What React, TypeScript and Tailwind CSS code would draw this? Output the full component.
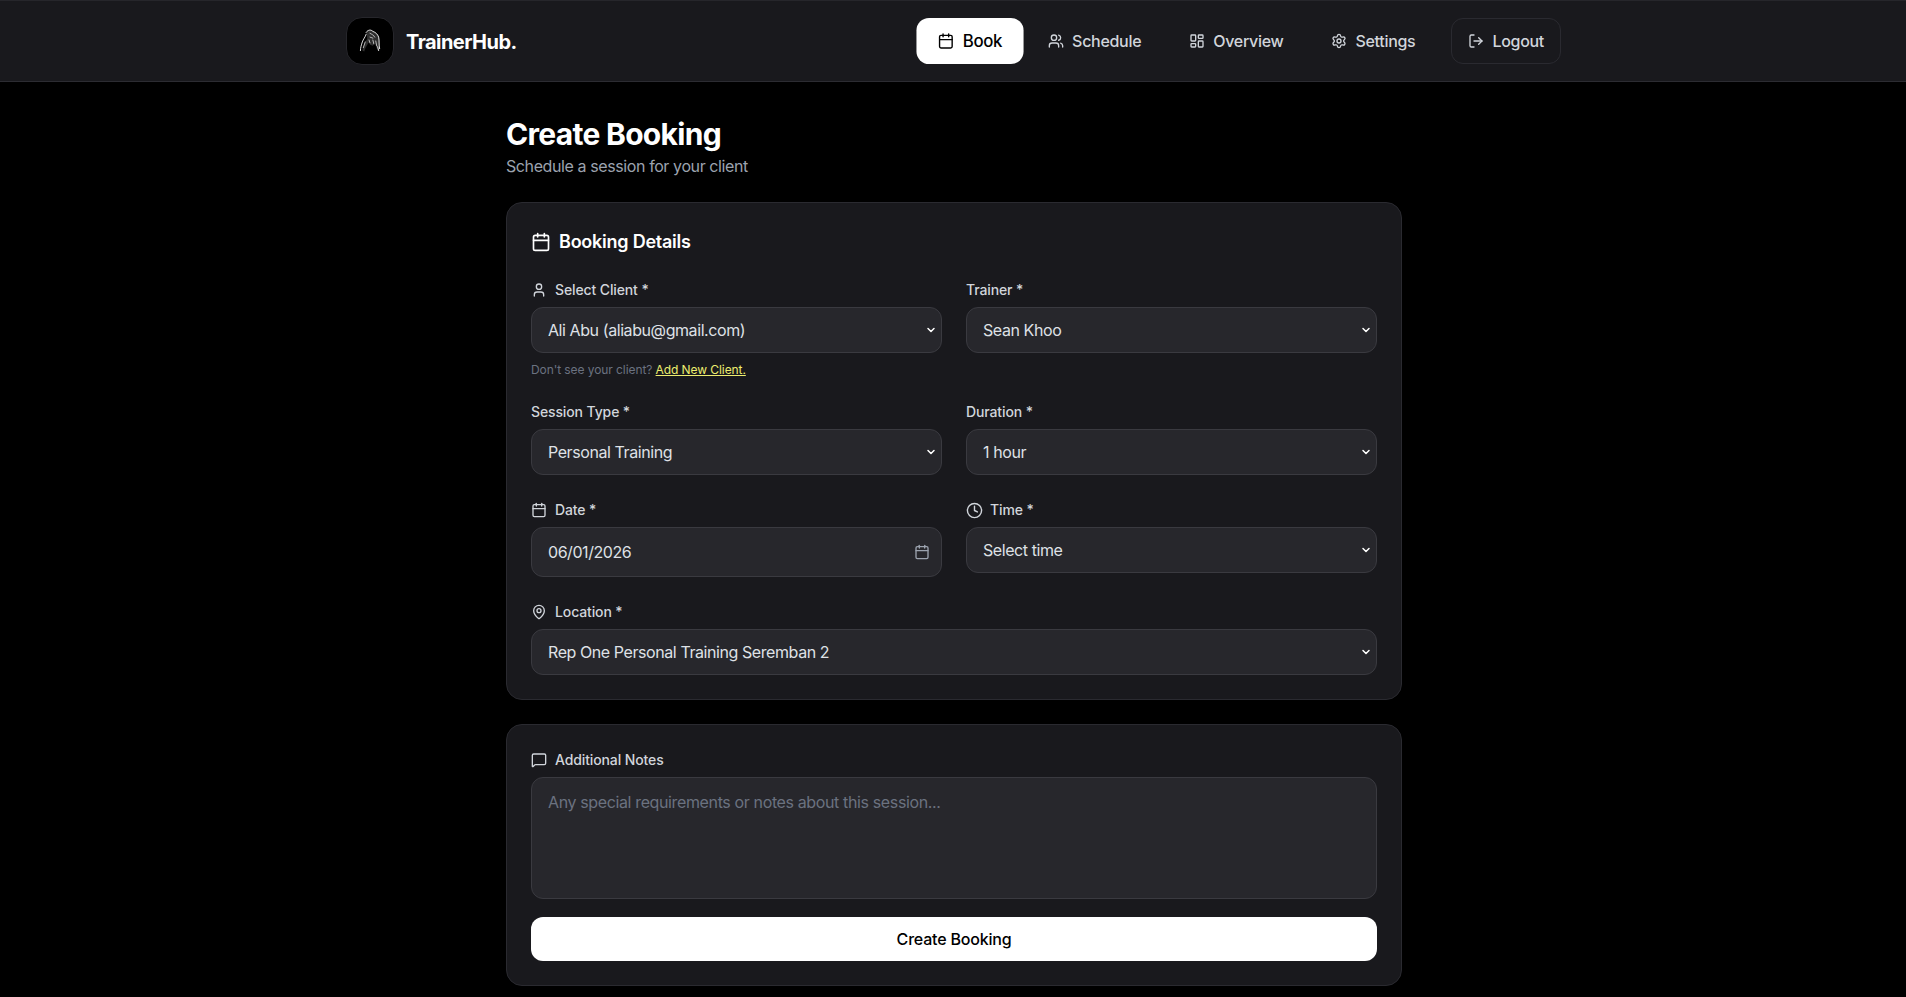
import { Calendar, ChevronDown, Clock, LayoutDashboard, LogOut, MapPin, MessageSquare, Settings, User, Users } from 'lucide-react';
import type { ReactNode } from 'react';

function LogoFigure() {
  return (
    <svg viewBox="0 0 48 48" className="w-12 h-12" fill="none" strokeLinecap="round" strokeLinejoin="round">
      <path d="M20 15c2-3 5-3 7-1 3 1 5 3 6 6 1 4 0 8 1 12l-2 2c-1-3-2-5-3-8l-2 3-3-1-1-3c-2 3-4 6-5 10l-2-1c1-5 3-9 5-12 0-3 0-5-1-7z" fill="#2e2e2e" />
      <path d="M20 15c2-3 5-3 7-1 3 1 5 3 6 6 1 4 0 8 1 12" stroke="#f5f5f5" strokeWidth="1" />
      <path d="M20 17c-1 3-3 5-4 8-1 3-2 6-2 9M33 34l-1-4" stroke="#e5e5e5" strokeWidth="1" />
      <path d="M24 16c2 1 4 2 5 4M24 20l3 1M27 23l1 4M23 23l1 3M19 25l-2 6M30 24l1 5" stroke="#cfcfcf" strokeWidth="0.9" />
    </svg>
  );
}

function NavItem({ icon, label, active }: { icon: ReactNode; label: string; active?: boolean }) {
  return (
    <button className={`flex items-center gap-2 h-11 px-5 rounded-xl font-medium tracking-[-0.3px] ${active ? 'bg-white text-black scale-105' : 'text-[#d1d5db]'}`}>
      {icon}
      {label}
    </button>
  );
}

function FieldLabel({ icon, children }: { icon?: ReactNode; children: ReactNode }) {
  return (
    <label className="flex items-center gap-2 h-5 mb-[7px] text-sm font-medium tracking-[-0.12px] text-[#d1d5db]">
      {icon}
      {children}
    </label>
  );
}

function SelectBox({ value }: { value: string }) {
  return (
    <div className="relative">
      <select
        defaultValue={value}
        className="w-full h-[46px] appearance-none rounded-xl border border-[#3a3a40] bg-[#27272c] px-4 text-base tracking-[-0.42px] text-[#dfe1e6] outline-none"
      >
        <option>{value}</option>
      </select>
      <ChevronDown size={12} strokeWidth={3} className="absolute right-[5px] top-[17px] text-white pointer-events-none" />
    </div>
  );
}

export default function App() {
  return (
    <div className="min-h-screen bg-black text-white font-['Inter',sans-serif] overflow-hidden">
      <header className="h-[82px] bg-[#19191d] border-b border-[#2c2c32] border-t-[#26262b] border-t">
        <div className="max-w-7xl mx-auto pl-[33px] pr-8 h-full flex items-center justify-between">
          <div className="flex items-center gap-3">
            <div className="w-12 h-12 rounded-2xl bg-black border border-[#26262b] flex items-center justify-center overflow-hidden">
              <LogoFigure />
            </div>
            <span className="pt-px text-xl font-bold tracking-[-0.55px] text-white">TrainerHub.</span>
          </div>
          <nav className="flex items-center gap-2">
            <NavItem active icon={<Calendar size={16} />} label="Book" />
            <NavItem icon={<Users size={16} />} label="Schedule" />
            <NavItem icon={<LayoutDashboard size={16} />} label="Overview" />
            <NavItem icon={<Settings size={16} />} label="Settings" />
            <button className="ml-2 flex items-center gap-2 h-[46px] px-4 rounded-xl border border-[#2a2a30] font-medium tracking-[-0.3px] text-[#d1d5db]">
              <LogOut size={16} />
              Logout
            </button>
          </nav>
        </div>
      </header>

      <main className="max-w-[898px] mx-auto pl-[2px] pt-[34px]">
        <h1 className="text-3xl font-bold leading-9 tracking-[-0.7px] text-white">Create Booking</h1>
        <p className="mt-0.5 text-base leading-6 tracking-[-0.4px] text-[#9ca3af]">Schedule a session for your client</p>

        <section className="mt-[24px] h-[498px] rounded-2xl border border-[#2a2a30] bg-[#19191d] px-6 pt-[25px]">
          <h2 className="flex items-center gap-2 h-7 text-lg font-semibold tracking-[-0.24px] text-white">
            <Calendar size={20} />
            Booking Details
          </h2>
          <div className="mt-6 grid grid-cols-2 gap-x-6">
            <div>
              <FieldLabel icon={<User size={16} />}>Select Client *</FieldLabel>
              <SelectBox value="Ali Abu (aliabu@gmail.com)" />
              <p className="mt-[9px] -mb-px text-xs leading-4 tracking-[-0.08px] text-[#6b7280]">
                Don't see your client? <a className="text-[#eded6f] underline">Add New Client.</a>
              </p>
            </div>
            <div>
              <FieldLabel>Trainer *</FieldLabel>
              <SelectBox value="Sean Khoo" />
            </div>
          </div>
          <div className="mt-[25px] grid grid-cols-2 gap-x-6">
            <div>
              <FieldLabel>Session Type *</FieldLabel>
              <SelectBox value="Personal Training" />
            </div>
            <div>
              <FieldLabel>Duration *</FieldLabel>
              <SelectBox value="1 hour" />
            </div>
          </div>
          <div className="mt-[25px] grid grid-cols-2 gap-x-6">
            <div>
              <FieldLabel icon={<Calendar size={16} />}>Date *</FieldLabel>
              <div className="relative">
                <input
                  readOnly
                  value="06/01/2026"
                  className="w-full h-[50px] rounded-xl border border-[#3a3a40] bg-[#27272c] px-4 text-base tracking-[-0.45px] text-[#dfe1e6] outline-none"
                />
                <Calendar size={16} className="absolute right-3 top-[17px] text-[#9ca3af] pointer-events-none" />
              </div>
            </div>
            <div>
              <FieldLabel icon={<Clock size={17} className="-mr-px" />}>Time *</FieldLabel>
              <SelectBox value="Select time" />
            </div>
          </div>
          <div className="mt-[25px]">
            <FieldLabel icon={<MapPin size={16} />}>Location *</FieldLabel>
            <SelectBox value="Rep One Personal Training Seremban 2" />
          </div>
        </section>

        <section className="mt-6 h-[262px] rounded-2xl border border-[#2a2a30] bg-[#19191d] px-6 pt-[25px]">
          <FieldLabel icon={<MessageSquare size={16} />}>Additional Notes</FieldLabel>
          <textarea
            readOnly
            placeholder="Any special requirements or notes about this session..."
            className="block w-full h-[122px] resize-none rounded-xl border border-[#3a3a40] bg-[#27272c] px-4 py-3 text-base tracking-[-0.37px] text-[#e5e7eb] placeholder:text-[#6b7280] outline-none"
          />
          <button className="mt-[18px] w-full h-11 rounded-xl bg-white text-base font-medium tracking-[-0.2px] text-black">Create Booking</button>
        </section>
      </main>
    </div>
  );
}
